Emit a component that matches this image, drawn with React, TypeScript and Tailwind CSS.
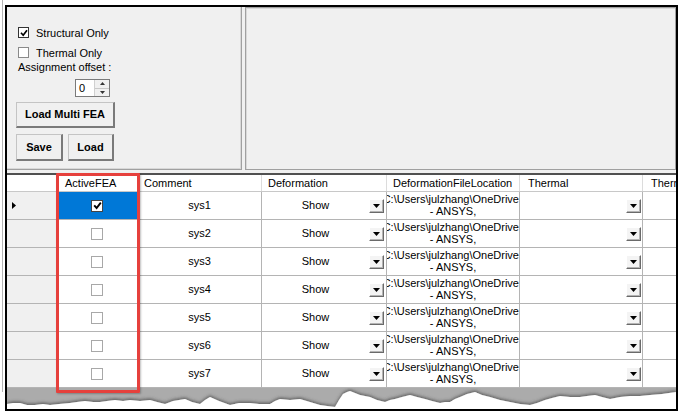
import React from "react";

function FormCheck({ checked }: { checked: boolean }) {
  return (
    <span
      className={`w-[11px] h-[11px] border bg-white flex items-center justify-center ${
        checked ? "border-[#333333]" : "border-[#8a8a8a]"
      }`}
    >
      {checked && (
        <svg width="8" height="8" viewBox="0 0 8 8">
          <path d="M1 3.8 L3.2 6.2 L7 1.2" stroke="#000" strokeWidth="1.7" fill="none" />
        </svg>
      )}
    </span>
  );
}

function GridCheck({ checked }: { checked: boolean }) {
  return (
    <span
      className={`w-[12px] h-[12px] border bg-white flex items-center justify-center ${
        checked ? "border-[#444444]" : "border-[#a8a8a8]"
      }`}
    >
      {checked && (
        <svg width="9" height="9" viewBox="0 0 9 9">
          <path d="M1.2 4.4 L3.6 7 L7.8 1.6" stroke="#000" strokeWidth="1.9" fill="none" />
        </svg>
      )}
    </span>
  );
}

function DropBtn() {
  return (
    <span className="w-[15px] h-[14px] bg-[#f4f4f4] border border-t-[#ffffff] border-l-[#ffffff] border-r-[#6a6a6a] border-b-[#6a6a6a] shadow-[inset_-1px_-1px_0_#b4b4b4] flex items-center justify-center">
      <svg width="7" height="4" viewBox="0 0 7 4">
        <path d="M0 0 H7 L3.5 4 Z" fill="#000" />
      </svg>
    </span>
  );
}

const tornPts: [number, number][] = [
  [0, 14], [6, 13], [13, 13], [20, 15], [28, 15], [36, 14], [43, 15], [52, 14], [63, 13], [70, 12],
  [78, 11], [86, 12], [93, 12], [100, 11], [108, 10], [116, 11], [123, 10], [133, 11], [143, 10],
  [150, 12], [158, 14], [166, 11], [178, 9], [185, 12], [193, 14], [198, 10], [203, 7], [212, 11],
  [223, 15], [232, 13], [243, 13], [252, 14], [263, 14], [268, 11], [273, 9], [283, 10], [293, 9],
  [303, 12], [313, 15], [320, 16], [328, 17], [332, 10], [336, 4], [340, 2], [343, 1], [348, 3],
  [353, 5], [358, 6], [363, 7], [370, 10], [378, 12], [383, 10], [388, 9], [395, 7], [403, 5],
  [410, 7], [418, 9], [425, 11], [433, 13], [438, 12], [443, 12], [448, 9], [453, 7], [460, 4],
  [468, 2], [475, 5], [483, 7], [493, 10], [503, 12], [513, 14], [523, 15], [530, 13], [538, 10],
  [545, 8], [553, 6], [563, 7], [573, 7], [580, 6], [588, 5], [595, 7], [603, 9], [613, 7],
  [623, 6], [633, 6], [643, 5], [655, 4], [669, 2],
];

function Torn() {
  const pts = tornPts.map(([x, y]) => `${x},${Math.min(y + 2, 19)}`).join(" ");
  return (
    <svg width="669" height="21" viewBox="0 0 669 21" className="block">
      <defs>
        <filter id="sh" x="-5%" y="-80%" width="110%" height="200%">
          <feDropShadow dx="0" dy="-1.5" stdDeviation="1.6" floodColor="#404040" floodOpacity="0.7" />
        </filter>
      </defs>
      <rect x="0" y="0" width="669" height="21" fill="#ababab" />
      <polygon points={`${pts} 669,21 0,21`} fill="#ffffff" filter="url(#sh)" />
    </svg>
  );
}

const rows = ["sys1", "sys2", "sys3", "sys4", "sys5", "sys6", "sys7"];

export default function App() {
  return (
    <div className="w-[683px] h-[419px] bg-white flex items-start overflow-hidden text-[11px] leading-none text-black font-['Liberation_Sans',Arial,sans-serif]">
      <div className="w-[1px] h-[392px] ml-[2px] mr-[2px] bg-[#b4b4b4]" />
      <div className="relative mt-[5px] w-[673px] h-[406px] border-2 border-black flex flex-col bg-white overflow-hidden">
        {/* top area */}
        <div className="h-[166px] flex bg-[#f0f0f0]">
          <div className="w-[235px] h-[163px] border-r border-b border-[#a0a0a0] shadow-[inset_-1px_-1px_0_#d8d8d8] flex flex-col pl-[9px] pt-[20px]">
            <div className="flex items-center h-[11px] ml-[2px] gap-[7px]">
              <FormCheck checked />
              <span className="leading-[12px]">Structural Only</span>
            </div>
            <div className="flex items-center h-[11px] ml-[2px] mt-[9px] gap-[7px]">
              <FormCheck checked={false} />
              <span className="leading-[12px]">Thermal Only</span>
            </div>
            <div className="ml-[2px] mt-[3px] h-[12px] leading-[12px]">Assignment offset :</div>
            <div className="ml-[59px] mt-[6px] w-[35px] h-[18px] border border-[#7a7a7a] bg-white flex">
              <span className="flex-1 pl-[3px] flex items-center text-[11px]">0</span>
              <span className="w-[15px] flex flex-col border-l border-[#d0d0d0]">
                <span className="flex-1 bg-[#f0f0f0] border-b border-[#c8c8c8] flex items-center justify-center">
                  <svg width="5" height="3" viewBox="0 0 5 3">
                    <path d="M0 3 H5 L2.5 0 Z" fill="#333" />
                  </svg>
                </span>
                <span className="flex-1 bg-[#f0f0f0] flex items-center justify-center">
                  <svg width="5" height="3" viewBox="0 0 5 3">
                    <path d="M0 0 H5 L2.5 3 Z" fill="#333" />
                  </svg>
                </span>
              </span>
            </div>
            <button className="mt-[5px] w-[99px] h-[26px] bg-[#f0f0f0] border border-[#c4c4c4] border-r-2 border-b-2 border-r-[#7a7a7a] border-b-[#7a7a7a] font-bold text-[11px] flex items-center justify-center">
              Load Multi FEA
            </button>
            <div className="mt-[6px] flex gap-[5px]">
              <button className="w-[47px] h-[27px] bg-[#f0f0f0] border border-[#c4c4c4] border-r-2 border-b-2 border-r-[#7a7a7a] border-b-[#7a7a7a] font-bold text-[11px] flex items-center justify-center">
                Save
              </button>
              <button className="w-[46px] h-[27px] bg-[#f0f0f0] border border-[#c4c4c4] border-r-2 border-b-2 border-r-[#7a7a7a] border-b-[#7a7a7a] font-bold text-[11px] flex items-center justify-center">
                Load
              </button>
            </div>
          </div>
          <div className="flex-1 h-[163px] ml-[3px] border border-[#a0a0a0] shadow-[inset_1px_1px_0_#d8d8d8] bg-[#f0f0f0]" />
        </div>

        {/* grid top border */}
        <div className="h-[2px] bg-[#505050]" />

        {/* header */}
        <div className="h-[17px] flex bg-white border-b border-[#c8c8c8]">
          <div className="w-[50px] border-r border-[#dcdcdc]" />
          <div className="w-[81px] border-r border-[#dcdcdc] pl-[8px] flex items-center">ActiveFEA</div>
          <div className="w-[124px] border-r border-[#dcdcdc] pl-[6px] flex items-center">Comment</div>
          <div className="w-[125px] border-r border-[#dcdcdc] pl-[6px] flex items-center">Deformation</div>
          <div className="w-[133px] border-r border-[#dcdcdc] pl-[6px] flex items-center whitespace-nowrap overflow-hidden">DeformationFileLocation</div>
          <div className="w-[123px] border-r border-[#dcdcdc] pl-[8px] flex items-center">Thermal</div>
          <div className="w-[33px] min-w-0 pl-[8px] flex items-center whitespace-nowrap overflow-hidden">ThermalFileLocation</div>
        </div>

        {/* rows */}
        {rows.map((name, i) => (
          <div key={name} className="h-[28px] flex">
            <div className="w-[50px] bg-[#f0f0f0] border-r border-b border-[#b4b4b4] flex items-center pl-[5px]">
              {i === 0 && (
                <svg width="4" height="7" viewBox="0 0 4 7">
                  <path d="M0 0 L4 3.5 L0 7 Z" fill="#000" />
                </svg>
              )}
            </div>
            <div
              className={`w-[81px] border-r border-b border-[#b4b4b4] flex items-center justify-center ${
                i === 0 ? "bg-[#0078d7]" : "bg-white"
              }`}
            >
              <GridCheck checked={i === 0} />
            </div>
            <div className="w-[124px] bg-white border-r border-b border-[#b4b4b4] flex items-center justify-center">
              {name}
            </div>
            <div className="w-[125px] bg-white border-r border-b border-[#b4b4b4] flex items-center pr-[2px]">
              <span className="flex-1 text-center">Show</span>
              <DropBtn />
            </div>
            <div className="w-[133px] bg-white border-r border-b border-[#b4b4b4] flex flex-col pt-[1px] leading-[12px] overflow-hidden">
              <div className="flex justify-end whitespace-nowrap">C:\Users\julzhang\OneDrive</div>
              <div className="text-center whitespace-nowrap">- ANSYS,</div>
            </div>
            <div className="w-[123px] bg-white border-r border-b border-[#b4b4b4] flex items-center justify-end pr-[1px]">
              <DropBtn />
            </div>
            <div className="w-[33px] bg-white border-b border-[#b4b4b4]" />
          </div>
        ))}

        {/* torn bottom */}
        <div className="flex-1 overflow-hidden">
          <Torn />
        </div>

        {/* red highlight callout */}
        <div className="absolute left-[49px] top-[166px] w-[84px] h-[220px] border-[3px] border-[#e6403c] rounded-[1px] shadow-[1px_1px_2px_rgba(0,0,0,0.25)]" />
      </div>
    </div>
  );
}
